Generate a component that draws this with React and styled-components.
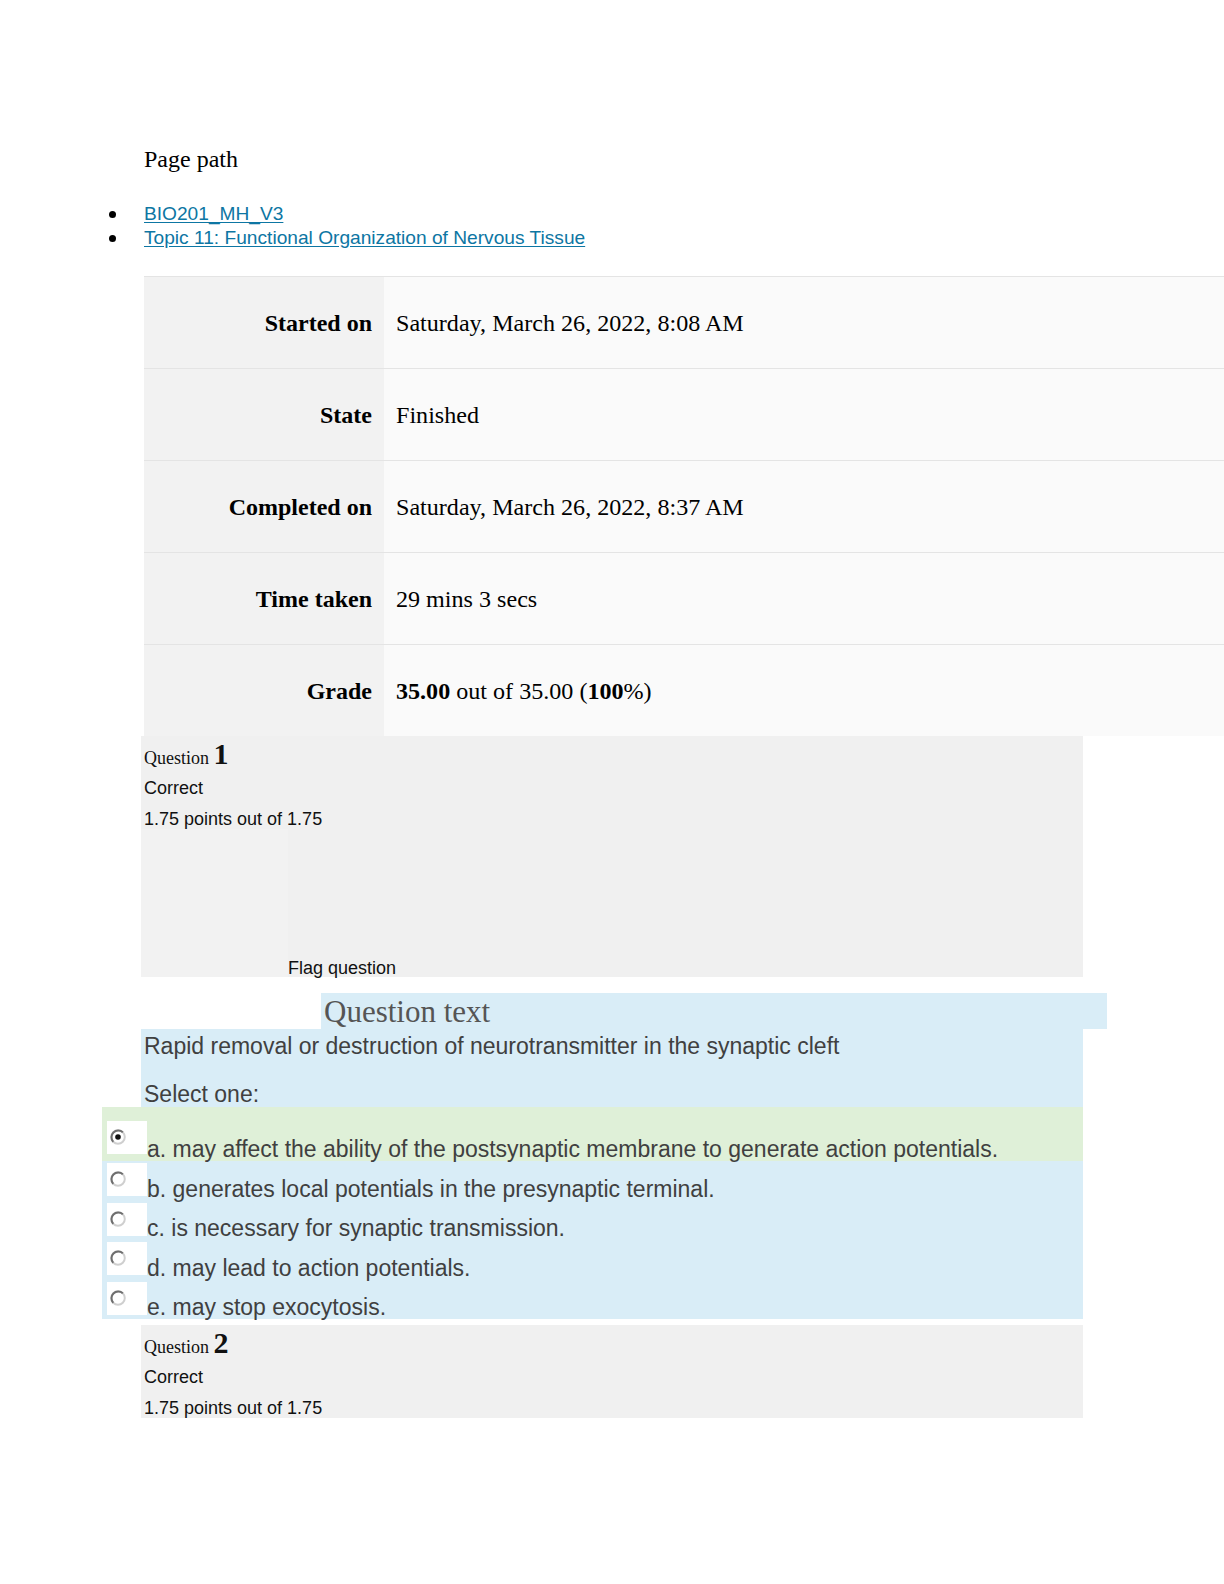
import React from 'react';
import styled, { createGlobalStyle } from 'styled-components';

const GlobalStyle = createGlobalStyle`
  html, body {
    margin: 0;
    padding: 0;
    background: #ffffff;
  }
  body {
    font-family: "Liberation Serif", "Times New Roman", serif;
    color: #000;
  }
`;

const sans = `"Liberation Sans", Arial, Helvetica, sans-serif`;
const serif = `"Liberation Serif", "Times New Roman", serif`;

const Page = styled.div`
  width: 1224px;
  padding-top: 145px;
  padding-bottom: 166px;
`;

const PagePath = styled.div`
  margin-left: 144px;
  font-family: ${serif};
  font-size: 24px;
  line-height: 28px;
`;

const Crumbs = styled.ul`
  list-style: none;
  margin: 29px 0 0;
  padding: 0;
`;

const Crumb = styled.li`
  display: flex;
  align-items: center;
  height: 24px;
  font-family: ${sans};
  font-size: 19.15px;
`;

const Bullet = styled.span`
  width: 7px;
  height: 7px;
  border-radius: 50%;
  background: #000;
  margin-left: 109px;
  margin-right: 28px;
  flex: none;
`;

const CrumbLink = styled.a`
  color: #0d76a3;
  text-decoration: underline;
  text-underline-offset: 2px;
`;

const SummaryTable = styled.div`
  margin: 26px 0 0 144px;
  width: 1080px;
  display: grid;
  grid-template-columns: 240px 1fr;
  grid-auto-rows: 92px;
`;

const LabelCell = styled.div`
  border-top: 1px solid #e4e4e4;
  background: #f2f2f2;
  display: flex;
  align-items: center;
  justify-content: flex-end;
  padding-right: 12px;
  padding-top: 2px;
  font-family: ${serif};
  font-weight: bold;
  font-size: 24px;
`;

const ValueCell = styled.div`
  border-top: 1px solid #e4e4e4;
  background: #fafafa;
  display: flex;
  align-items: center;
  padding-left: 12px;
  padding-top: 2px;
  font-family: ${serif};
  font-size: 24.1px;
  white-space: pre;
`;

const QuestionInfo = styled.div`
  margin-left: 141px;
  margin-top: ${p => p.$gap || 0}px;
  width: 942px;
  background: #f0f0f0;
`;

const QNo = styled.h3`
  margin: 0;
  padding-left: 3px;
  font-family: ${serif};
  font-weight: normal;
  font-size: 18px;
  line-height: 35px;
  height: 36px;
  color: #111;

  b {
    font-size: 30px;
  }
`;

const InfoLine = styled.div`
  padding-left: 3px;
  padding-top: ${p => p.$pt || 0}px;
  font-family: ${sans};
  font-size: 18px;
  line-height: ${p => p.$lh}px;
  color: #111;
`;

const FlagRow = styled.div`
  display: flex;
  height: 148px;
`;

const InfoSpacer = styled.div`
  width: 147px;
  flex: none;
  background: #f2f2f2;
`;

const FlagText = styled.div`
  align-self: flex-end;
  font-family: ${sans};
  font-size: 18px;
  line-height: 18px;
  color: #111;
`;

const QTextHeading = styled.h4`
  margin: 16px 0 0 321px;
  width: 783px;
  height: 36px;
  padding-left: 3px;
  background: #d9edf7;
  font-family: ${serif};
  font-weight: normal;
  font-size: 31px;
  line-height: 37px;
  color: #555;
`;

const QContent = styled.div`
  margin-left: 141px;
  width: 939px;
  padding-left: 3px;
  background: #d9edf7;
  font-family: ${sans};
  font-size: 23px;
  color: #404040;
`;

const QText = styled.div`
  line-height: 34px;
`;

const Prompt = styled.div`
  margin-top: 18px;
  line-height: 26px;
`;

const Answers = styled.div`
  margin-left: 102px;
  width: 981px;
  background: #d9edf7;
`;

const AnswerRow = styled.div`
  display: flex;
  align-items: flex-start;
  box-sizing: border-box;
  height: ${p => (p.$first ? 54 : 39.5)}px;
  padding: ${p => (p.$first ? 14 : 2)}px 0 0 5px;
  background: ${p => (p.$correct ? '#dff0d8' : 'transparent')};
`;

const RadioBox = styled.span`
  flex: none;
  width: 40px;
  height: 33px;
  background: #fff;
  display: flex;
  align-items: flex-start;

  svg {
    margin: 7px 0 0 2px;
  }
`;

const AnswerText = styled.span`
  align-self: flex-end;
  font-family: ${sans};
  font-size: 23px;
  line-height: 23px;
  color: #404040;
  white-space: nowrap;
`;

const Radio = ({ checked }) => (
  <svg width="18" height="18" viewBox="0 0 18 18">
    <circle cx="9" cy="9" r="6.8" fill="#fff" stroke="#cfcfcf" strokeWidth="2" />
    <path d="M4.2 13.8 A6.8 6.8 0 0 1 13.8 4.2" fill="none" stroke="#6e6e6e" strokeWidth="2" />
    {checked && <circle cx="9" cy="9" r="2.8" fill="#111" />}
  </svg>
);

const summary = [
  ['Started on', 'Saturday, March 26, 2022, 8:08 AM'],
  ['State', 'Finished'],
  ['Completed on', 'Saturday, March 26, 2022, 8:37 AM'],
  ['Time taken', '29 mins 3 secs'],
];

const answers = [
  'a. may affect the ability of the postsynaptic membrane to generate action potentials.',
  'b. generates local potentials in the presynaptic terminal.',
  'c. is necessary for synaptic transmission.',
  'd. may lead to action potentials.',
  'e. may stop exocytosis.',
];

const App = () => (
  <Page>
    <GlobalStyle />
    <PagePath>Page path</PagePath>
    <Crumbs>
      <Crumb>
        <Bullet />
        <CrumbLink>BIO201_MH_V3</CrumbLink>
      </Crumb>
      <Crumb>
        <Bullet />
        <CrumbLink>Topic 11: Functional Organization of Nervous Tissue</CrumbLink>
      </Crumb>
    </Crumbs>

    <SummaryTable>
      {summary.map(([label, value]) => (
        <React.Fragment key={label}>
          <LabelCell>{label}</LabelCell>
          <ValueCell>{value}</ValueCell>
        </React.Fragment>
      ))}
      <LabelCell>Grade</LabelCell>
      <ValueCell>
        <b>35.00</b> out of 35.00 (<b>100</b>%)
      </ValueCell>
    </SummaryTable>

    <QuestionInfo>
      <QNo>
        Question <b>1</b>
      </QNo>
      <InfoLine $lh={33}>Correct</InfoLine>
      <InfoLine $lh={20} $pt={4}>1.75 points out of 1.75</InfoLine>
      <FlagRow>
        <InfoSpacer />
        <FlagText>Flag question</FlagText>
      </FlagRow>
    </QuestionInfo>

    <QTextHeading>Question text</QTextHeading>
    <QContent>
      <QText>Rapid removal or destruction of neurotransmitter in the synaptic cleft</QText>
      <Prompt>Select one:</Prompt>
    </QContent>
    <Answers>
      {answers.map((text, i) => (
        <AnswerRow key={text} $first={i === 0} $correct={i === 0}>
          <RadioBox>
            <Radio checked={i === 0} />
          </RadioBox>
          <AnswerText>{text}</AnswerText>
        </AnswerRow>
      ))}
    </Answers>

    <QuestionInfo $gap={6}>
      <QNo>
        Question <b>2</b>
      </QNo>
      <InfoLine $lh={33}>Correct</InfoLine>
      <InfoLine $lh={20} $pt={4}>1.75 points out of 1.75</InfoLine>
    </QuestionInfo>
  </Page>
);

export default App;
